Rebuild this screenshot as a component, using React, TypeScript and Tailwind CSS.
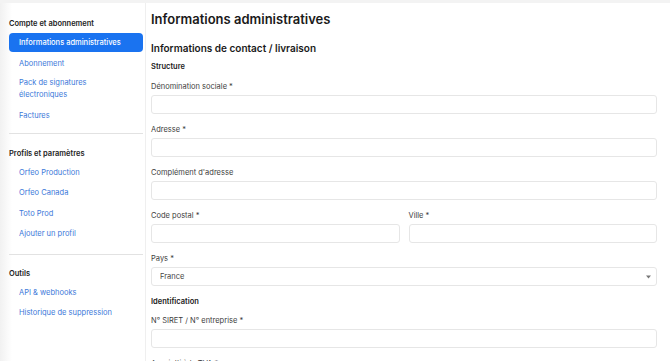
import React from "react";

const linkCls = "flex items-center pl-[10px] text-[7.5px] leading-[12px] text-[#3b78d9]";

function Field({ label, select }: { label: string; select?: boolean }) {
  return (
    <div className="flex flex-col">
      <div className="h-[10px] text-[7.5px] leading-[10px] text-[#3d3d3d]">{label}</div>
      {select ? (
        <div className="mt-[3px] flex h-[19px] items-center justify-between rounded-[3px] border border-[#e6e6e6] bg-white pl-[8px] pr-[5px] text-[7.5px] text-[#444]">
          <span>France</span>
          <svg width="5" height="4" viewBox="0 0 5 4"><path d="M0 0.5h5L2.5 3.5z" fill="#777" /></svg>
        </div>
      ) : (
        <div className="mt-[3px] h-[19px] rounded-[3px] border border-[#e6e6e6] bg-white" />
      )}
    </div>
  );
}

export default function App() {
  return (
    <div className="flex h-[361px] w-[670px] flex-col overflow-hidden bg-white font-['Inter',sans-serif]">
      <div className="h-[3px] shrink-0 bg-[#f3f3f3]" />
      <div className="flex min-h-0 flex-1">
        <aside className="w-[146px] shrink-0 border-r border-[#efefef] bg-[linear-gradient(to_right,#f1f1f1,#ffffff_12px)] pl-[9px] pr-[2px] pt-[15px]">
          <div className="h-[12px] text-[7.5px] font-semibold leading-[12px] text-[#222]">Compte et abonnement</div>
          <div className="mt-[3px] flex h-[19px] items-center rounded-[4px] bg-[#1a73f0] pl-[10px] text-[7.5px] font-medium text-white">
            Informations administratives
          </div>
          <div className={`${linkCls} mt-[2px] h-[20px]`}>Abonnement</div>
          <div className={`${linkCls} pb-[5px] pt-[3px]`}>
            Pack de signatures<br />électroniques
          </div>
          <div className={`${linkCls} h-[20px]`}>Factures</div>
          <div className="mt-[7px] h-px bg-[#e2e2e2]" />

          <div className="mt-[14px] h-[12px] text-[7.5px] font-semibold leading-[12px] text-[#222]">Profils et paramètres</div>
          <div className="mt-[3px]">
            <div className={`${linkCls} h-[20.3px]`}>Orfeo Production</div>
            <div className={`${linkCls} h-[20.3px]`}>Orfeo Canada</div>
            <div className={`${linkCls} h-[20.3px]`}>Toto Prod</div>
            <div className={`${linkCls} h-[20.3px]`}>Ajouter un profil</div>
          </div>
          <div className="mt-[10px] h-px bg-[#e2e2e2]" />

          <div className="mt-[13px] h-[12px] text-[7.5px] font-semibold leading-[12px] text-[#222]">Outils</div>
          <div className="mt-[3px]">
            <div className={`${linkCls} h-[20px]`}>API &amp; webhooks</div>
            <div className={`${linkCls} h-[20px]`}>Historique de suppression</div>
          </div>
        </aside>

        <main className="min-w-0 flex-1 pl-[5px] pr-[13px] pt-[6px]">
          <h1 className="h-[20px] text-[13px] font-semibold leading-[20px] text-[#1a1a1a]">Informations administratives</h1>
          <h2 className="mt-[12px] h-[14px] text-[10px] font-semibold leading-[14px] text-[#1a1a1a]">Informations de contact / livraison</h2>
          <div className="mt-[7px] h-[10px] text-[7.5px] font-semibold leading-[10px] text-[#1a1a1a]">Structure</div>
          <div className="mt-[10px] flex flex-col gap-[11px]">
            <Field label="Dénomination sociale *" />
            <Field label="Adresse *" />
            <Field label="Complément d'adresse" />
            <div className="grid grid-cols-2 gap-x-[9px]">
              <Field label="Code postal *" />
              <Field label="Ville *" />
            </div>
            <Field label="Pays *" select />
          </div>
          <div className="mt-[11px] h-[10px] text-[7.5px] font-semibold leading-[10px] text-[#1a1a1a]">Identification</div>
          <div className="mt-[9px] flex flex-col gap-[11px]">
            <Field label="N° SIRET / N° entreprise *" />
            <Field label="Assujetti à la TVA *" />
          </div>
        </main>
      </div>
    </div>
  );
}
